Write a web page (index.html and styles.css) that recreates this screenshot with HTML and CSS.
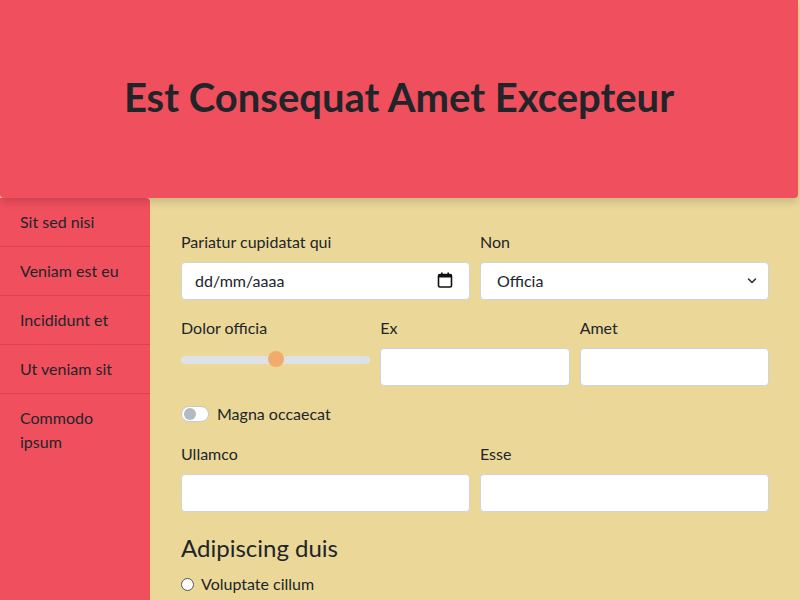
FILE: index.html
```html
<!DOCTYPE html>
<html lang="la">
<head>
<meta charset="utf-8">
<title>Est Consequat Amet Excepteur</title>
<link rel="stylesheet" href="styles.css">
</head>
<body>
<header class="hero">
  <h1 class="hero-title">Est Consequat Amet Excepteur</h1>
</header>
<div class="layout">
  <nav class="sidebar">
    <a class="side-item" href="#">Sit sed nisi</a>
    <a class="side-item" href="#">Veniam est eu</a>
    <a class="side-item" href="#">Incididunt et</a>
    <a class="side-item" href="#">Ut veniam sit</a>
    <a class="side-item last" href="#">Commodo ipsum</a>
  </nav>
  <main class="content">
    <form class="form">
      <div class="row two">
        <div class="field">
          <label class="label">Pariatur cupidatat qui</label>
          <div class="control date">
            <span class="date-text">dd/mm/aaaa</span>
            <svg class="cal" width="16" height="16" viewBox="0 0 16 16"><rect x="1.5" y="2.5" width="13" height="12.5" rx="1.5" fill="none" stroke="#111" stroke-width="1.6"/><rect x="1.5" y="2.5" width="13" height="3" fill="#111"/><rect x="4" y="0.5" width="1.6" height="3" fill="#111"/><rect x="10.4" y="0.5" width="1.6" height="3" fill="#111"/></svg>
          </div>
        </div>
        <div class="field">
          <label class="label">Non</label>
          <div class="control select">
            <span class="select-text">Officia</span>
            <svg class="chev" width="10" height="8" viewBox="0 0 10 8"><path d="M1.5 2 L5 5.5 L8.5 2" fill="none" stroke="#333" stroke-width="1.6" stroke-linecap="round" stroke-linejoin="round"/></svg>
          </div>
        </div>
      </div>
      <div class="row three">
        <div class="field">
          <label class="label">Dolor officia</label>
          <div class="range">
            <div class="track"></div>
            <div class="thumb"></div>
          </div>
        </div>
        <div class="field">
          <label class="label">Ex</label>
          <input class="control" type="text">
        </div>
        <div class="field">
          <label class="label">Amet</label>
          <input class="control" type="text">
        </div>
      </div>
      <div class="switch-row">
        <span class="switch"><span class="knob"></span></span>
        <span class="switch-label">Magna occaecat</span>
      </div>
      <div class="row two">
        <div class="field">
          <label class="label">Ullamco</label>
          <input class="control" type="text">
        </div>
        <div class="field">
          <label class="label">Esse</label>
          <input class="control" type="text">
        </div>
      </div>
      <h2 class="section">Adipiscing duis</h2>
      <div class="radio-row">
        <span class="radio"></span>
        <span class="radio-label">Voluptate cillum</span>
      </div>
    </form>
  </main>
</div>
</body>
</html>
```
FILE: styles.css
```css
* { box-sizing: border-box; }
html, body { margin: 0; padding: 0; }
body {
  font-family: "Lato", "Noto Sans", sans-serif;
  font-size: 16px;
  line-height: 24px;
  color: #212529;
  background: #ebd898;
  overflow: hidden;
  height: 600px;
}
.hero {
  height: 198px;
  background: #f04f5e;
  border-radius: 0 0 4px 4px;
  box-shadow: 0 4px 8px rgba(0,0,0,0.15);
  display: flex;
  align-items: center;
  justify-content: center;
  position: relative;
  z-index: 2;
  margin-right: 2px;
}
.hero-title {
  margin: 0;
  font-size: 40px;
  font-weight: 700;
  line-height: 46px;
  padding-bottom: 4px;
}
.layout {
  display: flex;
  height: 402px;
}
.sidebar {
  width: 150px;
  flex: none;
  background: #f04f5e;
  border-radius: 0 4px 0 0;
  display: flex;
  flex-direction: column;
}
.side-item {
  display: block;
  padding: 12px 20px;
  color: #212529;
  text-decoration: none;
  border-bottom: 1px solid #d8434f;
}
.side-item.last { border-bottom: none; }
.content {
  flex: 1;
  padding: 32px 31px 0 31px;
}
.row {
  display: grid;
  gap: 10px;
  margin-bottom: 16px;
}
.row.two { grid-template-columns: 1fr 1fr; }
.row.three { grid-template-columns: 1fr 1fr 1fr; }
.field { display: flex; flex-direction: column; }
.label { margin-bottom: 8px; }
.control {
  height: 38px;
  background: #fff;
  border: 1px solid #ced4da;
  border-radius: 4px;
  font: inherit;
  padding: 6px 12px;
  width: 100%;
}
.date, .select {
  display: flex;
  align-items: center;
  justify-content: space-between;
}
.date { padding: 6px 16px 6px 13px; }
.cal { margin-top: -2px; }
.select { padding: 6px 11px 6px 16px; }
.range {
  height: 38px;
  position: relative;
  display: flex;
  align-items: center;
}
.track {
  width: 100%;
  height: 8px;
  border-radius: 4px;
  background: #dee2e6;
  margin-top: -14px;
}
.thumb {
  position: absolute;
  left: calc(50% - 8px);
  top: 3px;
  width: 16px;
  height: 16px;
  border-radius: 50%;
  background: #f1ab6c;
}
.switch-row {
  display: flex;
  align-items: center;
  gap: 8px;
  margin-bottom: 16px;
}
.switch {
  width: 28px;
  height: 16px;
  border-radius: 8px;
  background: #fff;
  border: 1px solid #c4cad0;
  display: flex;
  align-items: center;
  padding: 0 2px;
}
.knob {
  width: 12px;
  height: 12px;
  border-radius: 50%;
  background: #b3bac1;
}
.section {
  margin: 21px 0 10px;
  font-size: 24px;
  font-weight: 400;
  line-height: 29px;
}
.radio-row {
  display: flex;
  align-items: center;
  gap: 7px;
}
.radio {
  width: 13px;
  height: 13px;
  border-radius: 50%;
  border: 1px solid #555;
  background: #fff;
}
```
